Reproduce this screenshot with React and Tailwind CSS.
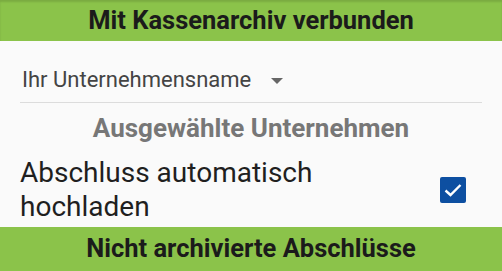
import React from 'react'

const App = () => {
    return (
        <div className="w-[502px] h-[271px] overflow-hidden bg-[#fafafa] flex flex-col" style={{ fontFamily: 'Roboto, "Liberation Sans", sans-serif' }}>
            {/* Header */}
            <div className="h-[41px] shrink-0 bg-[#8bc34a] flex items-center justify-center shadow-[inset_0_2px_2px_rgba(0,0,0,0.12)]">
                <span className="text-[25.5px] font-bold text-[#1b1b1b] leading-none">Mit Kassenarchiv verbunden</span>
            </div>

            {/* Company select */}
            <div className="mx-[20px] h-[62px] shrink-0 border-b border-[#dcdcdc] flex items-end pb-[11px]">
                <div className="flex items-center pl-[2px]">
                    <span className="text-[22px] text-[#444] leading-none">Ihr Unternehmensname</span>
                    <svg width="12" height="6" viewBox="0 0 12 6" className="ml-[20px] mt-[1px]">
                        <path d="M0 0 L12 0 L6 6 Z" fill="#666" />
                    </svg>
                </div>
            </div>

            <div className="h-[50px] shrink-0 flex items-center justify-center">
                <span className="text-[26px] font-bold text-[#777] leading-none">Ausgewählte Unternehmen</span>
            </div>

            {/* Auto upload */}
            <div className="flex items-center justify-between pl-[20px] pr-[36px] h-[74px] shrink-0">
                <span className="text-[28px] text-[#1f1f1f] leading-[34px]">Abschluss automatisch<br />hochladen</span>
                <div className="w-[26px] h-[26px] rounded-[2px] bg-[#0d4fa1] flex items-center justify-center">
                    <svg width="20" height="16" viewBox="0 0 20 16">
                        <path d="M2.5 8.5 L7.5 13 L17.5 3" stroke="#fff" strokeWidth="2.4" fill="none" />
                    </svg>
                </div>
            </div>

            {/* Footer */}
            <div className="flex-1 bg-[#8bc34a] flex items-center justify-center">
                <span className="text-[25.5px] font-bold text-[#1b1b1b] leading-none">Nicht archivierte Abschlüsse</span>
            </div>
        </div>
    )
}

export default App
